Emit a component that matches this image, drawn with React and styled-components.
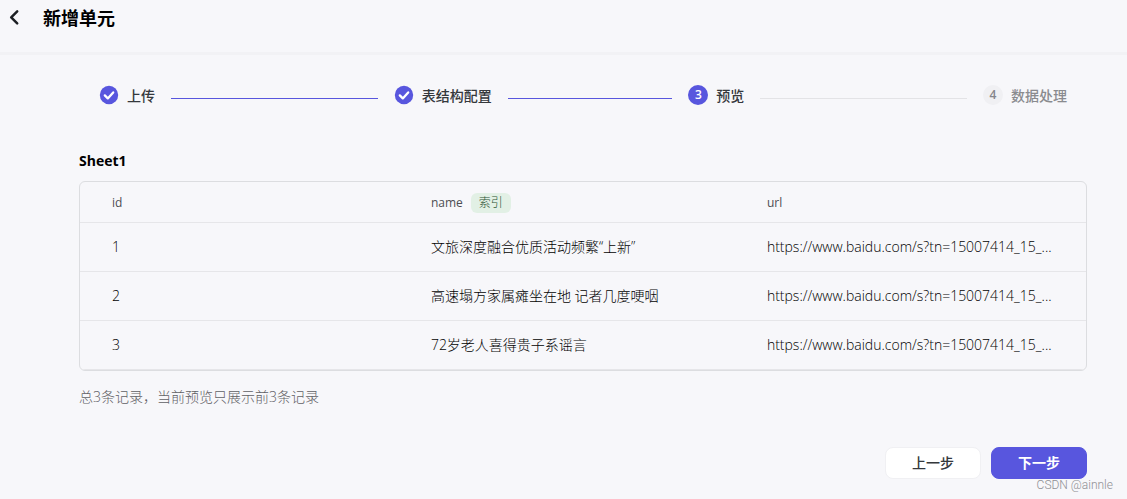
import React from 'react';
import styled, { createGlobalStyle } from 'styled-components';

const GlobalStyle = createGlobalStyle`
  * { box-sizing: border-box; }
  body {
    margin: 0;
    background: #f7f7fa;
    color: #1c1f23;
    font-family: "Open Sans", "Noto Sans CJK SC", sans-serif;
    font-size: 14px;
    line-height: 22px;
  }
`;

const Page = styled.div`
  position: relative;
  min-height: 100vh;
`;

const Header = styled.header`
  display: flex;
  align-items: center;
  gap: 16px;
  padding: 4px 5px 20px;
  border-bottom: 3px solid #f2f2f5;
`;

const BackButton = styled.button`
  display: flex;
  padding: 0;
  border: 0;
  background: none;
  color: #1c1f23;
  cursor: pointer;
`;

const Title = styled.h1`
  margin: 0;
  color: #000;
  font-size: 18px;
  line-height: 28px;
  font-weight: 700;
`;

const Main = styled.main`
  padding: 30px 40px 20px 79px;
`;

const Steps = styled.ol`
  display: flex;
  margin: 0;
  padding: 0 20px;
  list-style: none;
`;

const Step = styled.li`
  display: flex;
  flex: 1 1 0;
  align-items: flex-start;
  color: #35383c;
  font-weight: 500;
  white-space: nowrap;

  &:last-child {
    flex: none;
    color: #8a8b8f;
  }
`;

const StepBadge = styled.span`
  display: flex;
  align-items: center;
  justify-content: center;
  width: 20px;
  height: 20px;
  margin-right: 8px;
  border-radius: 50%;
  font-size: 12px;
  font-weight: 600;
  line-height: 20px;
  background: ${(p) => (p.$state === 'active' ? '#5856de' : p.$state === 'wait' ? '#f0f0f3' : 'transparent')};
  color: ${(p) => (p.$state === 'active' ? '#fff' : '#85868b')};
`;

const StepLine = styled.span`
  flex: 1;
  align-self: flex-end;
  height: 1px;
  margin: 0 16px 8px;
  background: ${(p) => (p.$done ? '#5856de' : '#e3e3e6')};
`;

const SheetTitle = styled.h2`
  margin: 43px 0 9px;
  color: #000;
  font-size: 14px;
  line-height: 22px;
  font-weight: 700;
`;

const TableFrame = styled.div`
  overflow: hidden;
  border: 1px solid #dcdde0;
  border-radius: 6px;
`;

const Table = styled.table`
  width: 100%;
  table-layout: fixed;
  border-collapse: separate;
  border-spacing: 0;
`;

const Col = styled.col`
  width: ${(p) => p.$width};
`;

const HeadCell = styled.th`
  height: 41px;
  padding: 2px 32px 0;
  border-bottom: 1px solid #e6e6e9;
  color: #4c4d52;
  font-size: 12px;
  font-weight: 400;
  line-height: 20px;
  text-align: left;
`;

const Cell = styled.td`
  height: 49px;
  padding: 0 24px 0 32px;
  overflow: hidden;
  border-bottom: 1px solid #e6e6e9;
  color: #000;
  font-weight: 300;
  text-overflow: ellipsis;
  white-space: nowrap;
`;

const HeadContent = styled.div`
  display: flex;
  align-items: center;
  gap: 8px;
`;

const Tag = styled.span`
  padding: 0 8px;
  border-radius: 6px;
  background: #e2f0e5;
  color: #2c5234;
  font-weight: 300;
`;

const Summary = styled.p`
  margin: 15px 0 0;
  color: #5f6065;
  font-weight: 300;
`;

const Actions = styled.div`
  display: flex;
  justify-content: flex-end;
  gap: 10px;
  margin-top: 39px;
`;

const Button = styled.button`
  width: 96px;
  height: 32px;
  padding: 0;
  border: 1px solid ${(p) => (p.$primary ? '#5856de' : '#f0f0f3')};
  border-radius: 8px;
  background: ${(p) => (p.$primary ? '#5856de' : '#fff')};
  color: ${(p) => (p.$primary ? '#fff' : '#35383c')};
  font: inherit;
  font-weight: ${(p) => (p.$primary ? 700 : 500)};
  line-height: 20px;
  cursor: pointer;
`;

const Watermark = styled.span`
  position: absolute;
  right: 14px;
  bottom: 6px;
  color: #8f8f94;
  font-family: Roboto, sans-serif;
  font-size: 12px;
  font-weight: 300;
  line-height: 16px;
`;

const steps = [
  { title: '上传', state: 'done' },
  { title: '表结构配置', state: 'done' },
  { title: '预览', state: 'active' },
  { title: '数据处理', state: 'wait' },
];

const rows = [
  { id: 1, name: '文旅深度融合优质活动频繁“上新”', url: 'https://www.baidu.com/s?tn=15007414_15_...' },
  { id: 2, name: '高速塌方家属瘫坐在地 记者几度哽咽', url: 'https://www.baidu.com/s?tn=15007414_15_...' },
  { id: 3, name: '72岁老人喜得贵子系谣言', url: 'https://www.baidu.com/s?tn=15007414_15_...' },
];

function ChevronIcon() {
  return (
    <svg width="22" height="22" viewBox="0 0 22 22" fill="none" aria-hidden="true">
      <path d="M12.2 4.4 6.2 10.4l6 6" stroke="currentColor" strokeWidth="2.5" strokeLinecap="round" strokeLinejoin="round" />
    </svg>
  );
}

function DoneIcon() {
  return (
    <svg width="20" height="20" viewBox="0 0 20 20" fill="none" aria-hidden="true">
      <circle cx="10" cy="10" r="9.2" fill="#5856de" />
      <path d="m5.8 10.4 3 3 5.4-6" stroke="#fff" strokeWidth="2.3" strokeLinecap="round" strokeLinejoin="round" />
    </svg>
  );
}

export default function App() {
  return (
    <Page>
      <GlobalStyle />
      <Header>
        <BackButton type="button" aria-label="返回">
          <ChevronIcon />
        </BackButton>
        <Title>新增单元</Title>
      </Header>
      <Main>
        <Steps>
          {steps.map((step, i) => (
            <Step key={step.title}>
              <StepBadge $state={step.state}>{step.state === 'done' ? <DoneIcon /> : i + 1}</StepBadge>
              <span>{step.title}</span>
              {i < steps.length - 1 && <StepLine $done={step.state === 'done'} />}
            </Step>
          ))}
        </Steps>
        <SheetTitle>Sheet1</SheetTitle>
        <TableFrame>
          <Table>
            <colgroup>
              <Col $width="31.7%" />
              <Col $width="33.4%" />
              <Col $width="34.9%" />
            </colgroup>
            <thead>
              <tr>
                <HeadCell scope="col">id</HeadCell>
                <HeadCell scope="col">
                  <HeadContent>
                    name <Tag>索引</Tag>
                  </HeadContent>
                </HeadCell>
                <HeadCell scope="col">url</HeadCell>
              </tr>
            </thead>
            <tbody>
              {rows.map((row) => (
                <tr key={row.id}>
                  <Cell>{row.id}</Cell>
                  <Cell>{row.name}</Cell>
                  <Cell>{row.url}</Cell>
                </tr>
              ))}
            </tbody>
          </Table>
        </TableFrame>
        <Summary>总3条记录，当前预览只展示前3条记录</Summary>
        <Actions>
          <Button type="button">上一步</Button>
          <Button type="button" $primary>下一步</Button>
        </Actions>
      </Main>
      <Watermark>CSDN @ainnle</Watermark>
    </Page>
  );
}
